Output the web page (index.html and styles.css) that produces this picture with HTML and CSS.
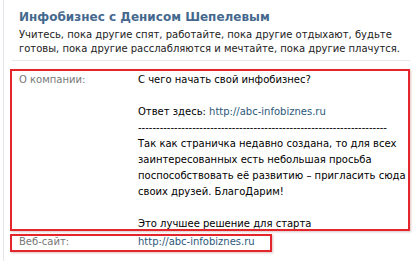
FILE: index.html
```html
<!DOCTYPE html>
<html lang="ru">
<head>
    <meta charset="UTF-8">
    <meta name="viewport" content="width=device-width, initial-scale=1.0">
    <title>Инфобизнес с Денисом Шепелевым</title>
    <link rel="stylesheet" href="styles.css">
</head>
<body>
    <div class="page">
        <div class="group-header">
            <h1 class="group-title">Инфобизнес с Денисом Шепелевым</h1>
            <p class="group-status">Учитесь, пока другие спят, работайте, пока другие отдыхают, будьте<br>готовы, пока другие расслабляются и мечтайте, пока другие плачутся.</p>
        </div>
        <div class="info">
            <div class="info-row about">
                <div class="label">О компании:</div>
                <div class="value">
                    С чего начать свой инфобизнес?<br>
                    <br>
                    Ответ здесь: <a href="#">http://abc-infobiznes.ru</a><br>
                    ---------------------------------------------------------------------<br>
                    Так как страничка недавно создана, то для всех<br>
                    заинтересованных есть небольшая просьба<br>
                    поспособствовать её развитию – пригласить сюда<br>
                    своих друзей. БлагоДарим!<br>
                    <br>
                    Это лучшее решение для старта
                </div>
            </div>
            <div class="info-row site">
                <div class="label">Веб-сайт:</div>
                <div class="value"><a href="#">http://abc-infobiznes.ru</a></div>
            </div>
        </div>
    </div>
</body>
</html>
```

FILE: styles.css
```css
body {
    margin: 0;
    background-color: #fff;
    font-family: "DejaVu Sans", Tahoma, sans-serif;
    font-size: 10px;
    color: #000;
}

.page {
    margin-left: 3px;
    border-left: 1px solid #e3e6ea;
    height: 261px;
}

.group-header {
    margin-left: 8px;
    width: 398px;
    padding: 9px 0 4px 7px;
    box-sizing: border-box;
    border-bottom: 1px solid #e9e9e9;
}

.group-title {
    margin: 0;
    font-size: 12px;
    line-height: 16px;
    color: #45688e;
}

.group-status {
    margin: 3px 0 0;
    line-height: 14px;
    color: #222;
    white-space: nowrap;
}

.info {
    margin-top: 8px;
    margin-left: 6px;
}

.info-row {
    display: grid;
    grid-template-columns: 119px 1fr;
    box-sizing: border-box;
    border: 2px solid #e3262c;
    padding-left: 7px;
    box-shadow: 1px 1px 2px rgba(120, 0, 0, 0.25);
    white-space: nowrap;
}

.about {
    width: 400px;
    height: 162px;
    padding-top: 1px;
    line-height: 16px;
}

.site {
    width: 262px;
    height: 18px;
    margin-top: 3px;
    line-height: 11px;
}

.label {
    color: #777;
}

.value a {
    color: #2b587a;
    text-decoration: none;
}
```
